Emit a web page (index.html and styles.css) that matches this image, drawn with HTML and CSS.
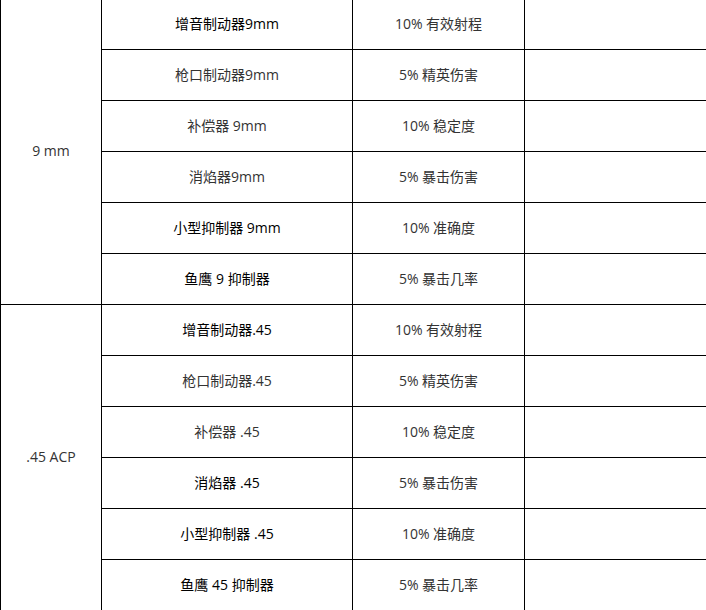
FILE: index.html
```html
<!DOCTYPE html>
<html lang="zh">
<head>
<meta charset="utf-8">
<link rel="stylesheet" href="styles.css">
</head>
<body>
<table class="grid">
  <colgroup>
    <col class="c1"><col class="c2"><col class="c3"><col class="c4">
  </colgroup>
  <tbody>
    <tr><td rowspan="6" class="cal">9 mm</td><td class="dark">增音制动器9mm</td><td>10% 有效射程</td><td></td></tr>
    <tr><td>枪口制动器9mm</td><td>5% 精英伤害</td><td></td></tr>
    <tr><td>补偿器 9mm</td><td>10% 稳定度</td><td></td></tr>
    <tr><td>消焰器9mm</td><td>5% 暴击伤害</td><td></td></tr>
    <tr><td class="dark">小型抑制器 9mm</td><td>10% 准确度</td><td></td></tr>
    <tr><td class="dark">鱼鹰 9 抑制器</td><td>5% 暴击几率</td><td></td></tr>
    <tr><td rowspan="6" class="cal">.45 ACP</td><td class="dark">增音制动器.45</td><td>10% 有效射程</td><td></td></tr>
    <tr><td>枪口制动器.45</td><td>5% 精英伤害</td><td></td></tr>
    <tr><td>补偿器 .45</td><td>10% 稳定度</td><td></td></tr>
    <tr><td class="dark">消焰器 .45</td><td>5% 暴击伤害</td><td></td></tr>
    <tr><td class="dark">小型抑制器 .45</td><td>10% 准确度</td><td></td></tr>
    <tr><td class="dark">鱼鹰 45 抑制器</td><td>5% 暴击几率</td><td></td></tr>
  </tbody>
</table>
</body>
</html>
```
FILE: styles.css
```css
html, body {
  margin: 0;
  padding: 0;
  background: #fff;
  overflow: hidden;
}
.grid {
  border-collapse: collapse;
  table-layout: fixed;
  width: 706px;
  margin-top: -2px;
  font-family: "Open Sans", "Noto Sans CJK SC", sans-serif;
  font-size: 14px;
  color: #333;
}
.c1 { width: 101px; }
.c2 { width: 251px; }
.c3 { width: 172px; }
.c4 { width: 182px; }
.grid td {
  border: 1px solid #000;
  height: 49px;
  padding: 0 0 1px;
  text-align: center;
  vertical-align: middle;
  line-height: 20px;
}
.grid td.dark {
  color: #000;
}
```
